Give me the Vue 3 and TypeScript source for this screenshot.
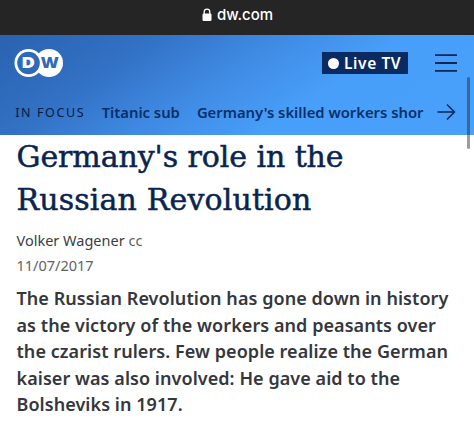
<script setup lang="ts">
const topics: string[] = ['Titanic sub', "Germany's skilled workers shor"]
const titleLines: string[] = ["Germany's role in the", 'Russian Revolution']
const introLines: string[] = [
  'The Russian Revolution has gone down in history',
  'as the victory of the workers and peasants over',
  'the czarist rulers. Few people realize the German',
  'kaiser was also involved: He gave aid to the',
  'Bolsheviks in 1917.',
]
</script>

<template>
  <div class="screen">
    <div class="address">
      <svg class="lock" width="10" height="14" viewBox="0 0 10 14">
        <path d="M2.2 6V3.9a2.8 2.8 0 0 1 5.6 0V6" fill="none" stroke="#fff" stroke-width="1.3" />
        <rect x="0.5" y="5.6" width="9" height="7.4" rx="1.2" fill="#fff" />
      </svg>
      <span>dw.com</span>
    </div>
    <header class="header">
      <div class="bar">
        <svg class="logo" width="50" height="30" viewBox="0 0 50 30">
          <circle cx="35" cy="15" r="14" fill="#fff" />
          <circle cx="14.5" cy="15" r="14" fill="#fff" />
          <circle cx="14.5" cy="15" r="11.3" fill="#2e69ba" />
          <text x="7.2" y="20.4" class="letter letter-d" textLength="13.8" lengthAdjust="spacingAndGlyphs">D</text>
          <text x="26.8" y="20.4" class="letter letter-w" textLength="18" lengthAdjust="spacingAndGlyphs">W</text>
        </svg>
        <button class="live"><i class="dot"></i><span>Live TV</span></button>
        <svg class="menu" width="22" height="20" viewBox="0 0 22 20">
          <path d="M0 2.2H22M0 10H22M0 17.8H22" stroke="#08275a" stroke-width="1.8" />
        </svg>
      </div>
      <nav class="focus">
        <span class="label">IN FOCUS</span>
        <a v-for="topic in topics" :key="topic" class="topic">{{ topic }}</a>
        <svg class="arrow" width="19" height="18" viewBox="0 0 19 18">
          <path d="M0.5 9H17.5M10 1.5L17.5 9L10 16.5" fill="none" stroke="#08275a" stroke-width="1.5" />
        </svg>
      </nav>
    </header>
    <main class="article">
      <h1><span v-for="line in titleLines" :key="line">{{ line }}</span></h1>
      <p class="author">Volker Wagener <span>cc</span></p>
      <p class="date">11/07/2017</p>
      <p class="intro"><span v-for="line in introLines" :key="line">{{ line }}</span></p>
    </main>
    <div class="scroll"></div>
  </div>
</template>

<style>
body {
  margin: 0;
  background: #fff;
}
</style>

<style scoped>
.screen {
  position: relative;
  width: 474px;
  height: 438px;
  overflow: hidden;
  background: #fff;
  font-family: 'Noto Sans', sans-serif;
}
.address {
  height: 35px;
  box-sizing: border-box;
  padding: 0 0 6px 1px;
  display: flex;
  align-items: center;
  justify-content: center;
  gap: 5px;
  background: #252525;
  color: #fff;
  font: 500 15px/20px Inter, sans-serif;
}
.header {
  height: 100px;
  box-sizing: border-box;
  padding: 13px 11px 0 14px;
  background: linear-gradient(146deg, #2b62b0 0%, #3271c4 25%, #3f8ae3 45%, #489ff9 66%, #48a0fa 100%);
}
.bar {
  display: flex;
  align-items: center;
  height: 30px;
}
.letter {
  font-family: 'Open Sans', sans-serif;
  font-weight: 800;
  font-size: 15px;
}
.letter-d {
  fill: #fff;
}
.letter-w {
  fill: #2e69ba;
}
.live {
  margin: 0 27px 0 auto;
  padding: 0 0 0 6px;
  border: 0;
  width: 86px;
  height: 22px;
  display: flex;
  align-items: center;
  gap: 5px;
  background: #0a2b61;
  color: #fff;
  font: 600 15.5px/22px 'Noto Sans', sans-serif;
  letter-spacing: 0.6px;
  white-space: nowrap;
}
.dot {
  width: 11px;
  height: 11px;
  flex: none;
  border-radius: 50%;
  background: #fff;
}
.menu {
  margin-right: 6px;
}
.focus {
  display: flex;
  align-items: center;
  height: 24px;
  margin-top: 22px;
  white-space: nowrap;
  color: #08306b;
}
.label {
  width: 86.5px;
  padding-left: 1.2px;
  font-size: 12.5px;
  letter-spacing: 1.6px;
  color: #061b46;
  flex: none;
}
.topic {
  font-size: 14.8px;
  font-weight: 600;
}
.topic + .topic {
  margin-left: 17px;
}
.arrow {
  margin: 0 7px 0 auto;
  flex: none;
}
.article {
  padding: 0 16.5px;
}
h1 {
  margin: 0;
  color: #08244f;
  font: 400 30px/43px 'DejaVu Serif', serif;
  letter-spacing: -0.08px;
  -webkit-text-stroke: 0.5px #08244f;
}
h1 span:last-child {
  letter-spacing: 0.15px;
}
h1 span,
.intro span {
  display: block;
  white-space: nowrap;
}
.author,
.date {
  margin: 0;
  font-size: 14.5px;
  line-height: 25px;
  color: #3b3d43;
}
.author {
  margin-top: 7px;
}
.author span,
.date {
  color: #5f6167;
}
.intro {
  margin: 7px 0 0;
  color: #34373d;
  font-size: 18px;
  font-weight: 600;
  letter-spacing: 0.06px;
  line-height: 26.6px;
}
.scroll {
  position: absolute;
  left: 467px;
  top: 77px;
  width: 3px;
  height: 72px;
  border-radius: 2px;
  background: rgba(30, 35, 45, 0.45);
}
</style>
